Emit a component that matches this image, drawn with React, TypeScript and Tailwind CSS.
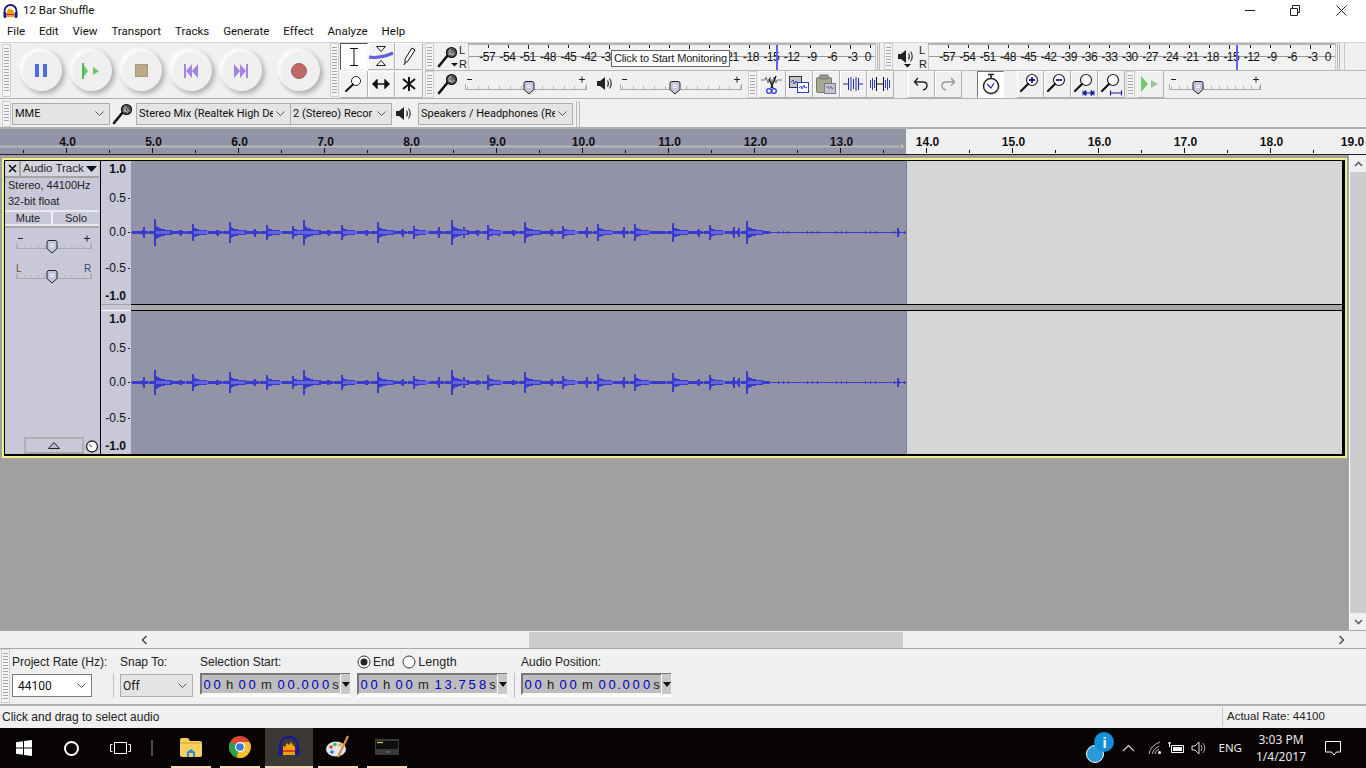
import type { ReactNode } from "react";

const onsets: [number, number][] = [
  [143, 5], [154, 13], [180, 2.5], [192, 8], [217, 2.5], [229, 10], [254, 3.5], [266, 7], [292, 6],
  [303, 12], [328, 2.5], [341, 7], [366, 2.5], [377, 10], [402, 3.5], [413, 6], [438, 5], [451, 12],
  [463, 5], [477, 2.5], [487, 7], [498, 2.5], [513, 2.5], [524, 10], [551, 3], [562, 6], [586, 5],
  [597, 8], [623, 5], [634, 8], [672, 9], [698, 3.5], [709, 7], [733, 5], [738, 4], [746, 11], [897, 4],
];

function buildWave(scale: number) {
  let peak = "";
  let rms = "";
  for (let i = 0; i < 775; i++) {
    const X = i + 131;
    const quiet = X > 762;
    let a = quiet ? ((X * X * 7) % 29 < 2 ? 1 : 0) : (X * 13) % 37 < 2 ? 0 : 1;
    let r = 0;
    for (const [x0, amp] of onsets) {
      const d = X - x0;
      if (d >= 0 && d < 2) a = Math.max(a, amp * scale);
      if (amp >= 5.5 && d >= 2 && d < 24) {
        a = Math.max(a, amp * 0.5 * Math.exp(-d / 7) + 1);
        r = Math.max(r, d < 16 ? 1 : 0);
      }
      if (amp < 5.5 && Math.abs(d) < 2 && !quiet) a = Math.max(a, 2);
    }
    peak += `M${i + 0.5} ${71 - a}V${72 + a}`;
    if (r) rms += `M${i + 0.5} ${71 - r}V${72 + r}`;
  }
  return { peak, rms };
}

const waves = [buildWave(1), buildWave(0.96)];

function Wave({ index }: { index: number }) {
  return (
    <svg width="775" height="143" className="block" shapeRendering="crispEdges">
      <path d={waves[index].peak} stroke="#3a3acb" fill="none" />
      <path d={waves[index].rms} stroke="#6464dc" fill="none" />
    </svg>
  );
}

function Grip({ className = "" }: { className?: string }) {
  return (
    <div className={`w-[9px] shrink-0 border border-[#cfcfcf] bg-[#f4f4f4] py-[3px] px-[1px] ${className}`}>
      <div className="h-full bg-[repeating-linear-gradient(to_bottom,#a6a6a6_0,#a6a6a6_1px,transparent_1px,transparent_3px)]" />
    </div>
  );
}

function Mic({ size = 22, caret = false }: { size?: number; caret?: boolean }) {
  return (
    <svg width={size} height={size} viewBox="0 0 22 22">
      <path d="M2 20 L11 9" stroke="#111" strokeWidth="2.6" strokeLinecap="round" />
      <circle cx="14.5" cy="6.5" r="5" fill="#555" stroke="#111" strokeWidth="1.2" />
      <path d="M11 5l5 5M13 3.5l5 5M11 8h6M13 3v6" stroke="#ddd" strokeWidth="0.6" />
      {caret && <path d="M14 17h7l-3.500 3.500z" fill="#111" />}
    </svg>
  );
}

function Speaker({ caret = false }: { caret?: boolean }) {
  return (
    <svg width="22" height="22" viewBox="0 0 22 22">
      <path d="M2 8h3l5-4v13l-5-4H2z" fill="#222" />
      <path d="M12.500 7.500q2 3 0 6M14.500 5.500q3.500 5 0 10" stroke="#333" strokeWidth="1.100" fill="none" />
      {caret && <path d="M8 18h7l-3.500 3.500z" fill="#111" />}
    </svg>
  );
}

function Slider({ width, thumb, left = "minus", right = "plus" }: { width: number; thumb: number; left?: string; right?: string }) {
  const ticks: number[] = [];
  for (let x = 2; x < width - 1; x += (width - 4) / 11) ticks.push(Math.round(x) + 0.5);
  return (
    <svg width={width} height="20" className="block">
      {left === "minus" ? <path d="M2 4.500h5" stroke="#222" /> : <text x="0" y="8" fontSize="10" fill="#6a5030" fontFamily="Liberation Sans">{left}</text>}
      {right === "plus" ? <path d={`M${width - 8} 4.500h6M${width - 5} 1.500v6`} stroke="#222" /> : <text x={width - 8} y="8" fontSize="10" fill="#3a4a70" fontFamily="Liberation Sans">{right}</text>}
      <path d={`M0.500 9v5M${width - 0.5} 9v5M0 14.500H${width}`} stroke="#a8a8a8" fill="none" />
      {ticks.map((x) => <path key={x} d={`M${x} 11v3`} stroke="#b8b8b8" />)}
      <path d={`M${thumb - 5} 8.500q0-2 2-2h6q2 0 2 2v6l-5 4.500-5-4.500z`} fill="#c4c6e0" stroke="#222" />
      <path d={`M${thumb - 2} 10.500h4M${thumb - 2} 12.500h4`} stroke="#f4f4f4" />
    </svg>
  );
}

function Transport({ children, className = "" }: { children: ReactNode; className?: string }) {
  return (
    <div className={`w-[50px] h-[50px] flex items-center justify-center ${className}`}>
      <div className="w-[41px] h-[41px] rounded-full bg-[#efefef] flex items-center justify-center shadow-[3px_3px_5px_#b4b4b4,-2px_-2px_3px_#ffffff,inset_1px_1px_2px_#ffffff,0_0_4px_#c8c8c8]">
        {children}
      </div>
    </div>
  );
}

function ToolCell({ children, active = false }: { children: ReactNode; active?: boolean }) {
  return (
    <div className={`h-[27px] flex items-center justify-center border-r border-b ${active ? "bg-white border-[#f8f8f8] border-l-[#555] border-t-[#555] border-l border-t" : "bg-[#f2f2f2] border-[#b4b4b4] shadow-[inset_1px_1px_0_#ffffff]"}`}>
      {children}
    </div>
  );
}

function Btn({ children, active = false, className = "" }: { children: ReactNode; active?: boolean; className?: string }) {
  return (
    <div className={`w-[27px] h-[27px] shrink-0 flex items-center justify-center border-r border-b ${active ? "bg-white border-white border-l border-t border-l-[#777] border-t-[#777]" : "border-[#b0b0b0] shadow-[inset_1px_1px_0_#ffffff]"} ${className}`}>
      {children}
    </div>
  );
}

function Magnifier({ extra }: { extra?: ReactNode }) {
  return (
    <svg width="24" height="24" viewBox="0 0 24 24">
      <circle cx="14" cy="8" r="5.500" fill="#fff" stroke="#222" strokeWidth="1.200" />
      <path d="M10 12L3 19" stroke="#111" strokeWidth="2.200" strokeLinecap="round" />
      {extra}
    </svg>
  );
}

const meterLabels = ["-57", "-54", "-51", "-48", "-45", "-42", "-39", "-36", "-33", "-30", "-27", "-24", "-21", "-18", "-15", "-12", "-9", "-6", "-3"];

function Meter({ blue, width }: { blue: number; width: number }) {
  return (
    <div className="relative h-[27px] border-t-2 border-[#b4b4b4] shrink-0 bg-[#f2f2f2]" style={{ width }}>
      <div className="absolute left-0 right-0 top-[11px] h-px bg-[#9a9a9a]" />
      <div className="absolute left-0 top-0 bottom-0 w-px bg-[#c8c8c8]" />
      <div className="absolute right-0 top-0 bottom-0 w-px bg-[#c8c8c8]" />
      <svg width={width} height="4" className="absolute left-0 top-0">
        {Array.from({ length: 21 }).map((_, i) => (
          <path key={i} d={`M${Math.round(i * 20.1 + 20) + 0.5} 0v${i % 4 === 2 ? 4 : 3}`} stroke="#222" />
        ))}
      </svg>
      <div className="relative flex pl-[9px] h-[23px] items-center text-[12px] leading-none text-[#111] tracking-[-0.5px]">
        {meterLabels.map((t) => (
          <span key={t} className="w-[20.3px] shrink-0 text-center">{t}</span>
        ))}
        <span className="ml-[2px]">0</span>
      </div>
      <div className="absolute top-0 bottom-0 w-[2px] bg-[#5f5ff0]" style={{ left: blue }} />
    </div>
  );
}

function LR() {
  return (
    <div className="w-[9px] h-[27px] flex flex-col justify-between text-[11px] leading-[12px] text-[#222] shrink-0 pt-[1px]">
      <span>L</span>
      <span>R</span>
    </div>
  );
}

function Combo({ text, className = "", white = false, big = false }: { text: string; className?: string; white?: boolean; big?: boolean }) {
  return (
    <div className={`flex items-center overflow-hidden border h-[22px] ${white ? "bg-white border-[#7a7a7a]" : "bg-[#e4e4e4] border-[#adadad]"} ${className}`}>
      <span className={`flex-1 overflow-hidden whitespace-nowrap pl-[2px] font-['Roboto',sans-serif] text-[#111] ${big ? "text-[12px]" : "text-[11px]"}`}>{text}</span>
      <svg width="17" height="10" className="shrink-0" viewBox="0 0 17 10">
        <path d="M3.500 2.500l4 4 4-4" stroke="#555" fill="none" />
      </svg>
    </div>
  );
}

const timeCells: [string, string, string][] = [
  ["0", "w-[10px]", "d"], ["0", "w-[10px]", "d"], ["h", "w-[15px]", "u"], ["0", "w-[10px]", "d"], ["0", "w-[10px]", "d"],
  ["m", "w-[19px]", "u"],
];

function TimeBox({ sec, frac }: { sec: string; frac: string }) {
  const cells: [string, string, string][] = [
    ...timeCells,
    [sec[0], "w-[10px]", "d"], [sec[1], "w-[10px]", "d"], [".", "w-[4px]", "d"],
    [frac[0], "w-[10px]", "d"], [frac[1], "w-[10px]", "d"], [frac[2], "w-[11px]", "d"], ["s", "w-[9px]", "u"],
  ];
  return (
    <div className="w-[150px] h-[22px] -mt-px flex items-center border-2 border-[#777] border-r-0 border-b-[#f8f8f8] bg-[#bdbdbd] shrink-0 shadow-[0_2px_0_#ffffff]">
      <div className="flex flex-1 items-center text-[13px] leading-none">
        {cells.map(([c, w, kind], i) => (
          <span key={i} className={`${w} text-center ${kind === "d" ? "text-[#0000c4]" : "text-[#222]"}`}>{c}</span>
        ))}
      </div>
      <div className="w-[10px] h-[20px] shrink-0 bg-[#c8c8c8] border-l border-white flex items-center justify-center">
        <svg width="8" height="5"><path d="M0 0h8L4 5z" fill="#111" /></svg>
      </div>
    </div>
  );
}

function VRuler() {
  const cls = "h-[14px] flex items-center justify-end pr-[1px]";
  const tick = <span className="w-[2px] h-px bg-[#222] ml-[2px]" />;
  const blank = <span className="w-[2px] ml-[2px]" />;
  return (
    <div className="w-[30px] shrink-0 bg-[#c8c8d8] text-[12px] leading-none text-[#111] pt-px">
      <div className={`${cls} font-bold`}>1.0{blank}</div>
      <div className={`${cls} mt-[15px]`}>0.5{tick}</div>
      <div className={`${cls} mt-[20px]`}>0.0{tick}</div>
      <div className={`${cls} mt-[22px]`}>-0.5{tick}</div>
      <div className={`${cls} mt-[14px] font-bold`}>-1.0{blank}</div>
    </div>
  );
}

function Channel({ index }: { index: number }) {
  return (
    <div className="h-[143px] flex">
      <VRuler />
      <div className="w-[776px] shrink-0 bg-[#9393a8] border-r border-[#7d7d90]">
        <Wave index={index} />
      </div>
      <div className="flex-1 bg-[#d6d6d6]" />
    </div>
  );
}

const rulerLabels = ["4.0", "5.0", "6.0", "7.0", "8.0", "9.0", "10.0", "11.0", "12.0", "13.0", "14.0", "15.0", "16.0", "17.0", "18.0"];

function Ruler() {
  return (
    <div className="h-[28px] relative border-t-2 border-[#b0b0b0] border-b border-b-[#222] bg-[#f0f0f0] overflow-hidden">
      <div className="absolute left-0 top-0 bottom-0 w-[906px] bg-[#9494a8]" />
      <svg width="1366" height="25" className="absolute left-0 top-0">
        <path d="M0 17.500H900" stroke="#b8b8b8" strokeWidth="2" />
        <path d="M900 13l6 4.500-6 4.500z" fill="#b4b4b4" stroke="#8a8a8a" />
        {Array.from({ length: 31 }).map((_, i) => {
          const x = 23.5 + i * 43;
          return <path key={i} d={`M${x} ${i % 2 ? 19 : 21}V24`} stroke="#111" />;
        })}
      </svg>
      <div className="relative flex pl-[24.500px] h-[24px] pt-[1px] items-center font-bold text-[12px] leading-none text-[#111]">
        {rulerLabels.map((t) => (
          <span key={t} className="w-[86px] shrink-0 text-center">{t}</span>
        ))}
        <span className="ml-[22px] w-[32px] shrink-0 text-center">19.0</span>
      </div>
    </div>
  );
}

function TrackPanel() {
  return (
    <div className="w-[95px] shrink-0 bg-[#c8c8d8] flex flex-col text-[11px] text-[#222] border-r border-transparent">
      <div className="h-[17px] flex border-b-2 border-[#a4a4a4]">
        <div className="w-[16px] flex items-center justify-center border-r-2 border-[#a4a4a4] bg-[#d4d4e0]">
          <svg width="9" height="9"><path d="M1 1l7 7M8 1l-7 7" stroke="#111" strokeWidth="1.600" /></svg>
        </div>
        <div className="flex-1 flex items-center pl-[2px] leading-none bg-[#d4d4e0] whitespace-nowrap text-[11.500px]">Audio Track</div>
        <div className="w-[14px] bg-[#d4d4e0] flex items-center">
          <svg width="13" height="8"><path d="M1 1h11L6.500 7z" fill="#111" /></svg>
        </div>
      </div>
      <div className="pl-[3px] leading-[16px] -mt-px">Stereo, 44100Hz</div>
      <div className="pl-[3px] leading-[16px]">32-bit float</div>
      <div className="h-[16px] flex mt-[1px] border-y-2 border-[#e8e8f0]">
        <div className="flex-1 flex items-center justify-center leading-none border-r-2 border-[#f2f2f4] bg-[#c8c8d8]">Mute</div>
        <div className="flex-1 flex items-center justify-center leading-none bg-[#c8c8d8]">Solo</div>
      </div>
      <div className="border-t-2 border-[#a8a8a8] pl-[11px] pt-[6px]">
        <Slider width={76} thumb={36} />
        <div className="mt-[10px]">
          <Slider width={76} thumb={36} left="L" right="R" />
        </div>
      </div>
      <div className="flex-1" />
      <div className="flex items-center pl-[19px] h-[17px]">
        <div className="w-[62px] h-[17px] border-2 border-[#b0b0b0] border-b-[#a8a8a8] bg-[#c8c8d8] flex items-center justify-center">
          <svg width="12" height="7"><path d="M0.500 6.500h11L6 0.500z" fill="#b8b8c4" stroke="#222" /></svg>
        </div>
        <svg width="14" height="14" className="ml-px">
          <circle cx="7" cy="7.500" r="5.500" fill="#fff" stroke="#222" strokeWidth="1.300" />
          <path d="M7 8L4 5.500" stroke="#2a2aa0" />
        </svg>
      </div>
    </div>
  );
}

function App() {
  return (
    <div className="w-[1366px] h-[768px] overflow-hidden flex flex-col bg-[#f0f0f0] font-['Liberation_Sans',sans-serif] relative">
      {/* title bar */}
      <div className="h-[22px] bg-white flex items-center pl-[3px] font-['Roboto',sans-serif] text-[11.500px] text-[#111] shrink-0">
        <svg width="15" height="15" viewBox="0 0 15 15">
          <path d="M1.500 10V7a6 6 0 0 1 12 0v3" stroke="#1a1a7a" strokeWidth="1.800" fill="none" />
          <rect x="0.500" y="8" width="3" height="6" rx="1.500" fill="#1a1a8a" />
          <rect x="11.500" y="8" width="3" height="6" rx="1.500" fill="#1a1a8a" />
          <path d="M4 13V7l2-3 1 2 1-2 1 2 2 1v6z" fill="#f0a010" />
          <path d="M4 10.500h7" stroke="#d02020" />
        </svg>
        <span className="ml-[5px]">12 Bar Shuffle</span>
        <div className="flex-1" />
        <svg width="120" height="22" className="mr-[1px]">
          <path d="M0 10.500h10" stroke="#222" />
          <path d="M45.500 8.500h7v7h-7zM47.500 8V5.500h7v7H53" stroke="#222" fill="none" />
          <path d="M91.500 5.500l10 10M101.500 5.500l-10 10" stroke="#222" />
        </svg>
      </div>
      {/* menu */}
      <div className="h-[20px] bg-white flex items-center pl-[7px] gap-[14px] font-['Roboto',sans-serif] text-[11.500px] text-[#111] shrink-0">
        {["File", "Edit", "View", "Transport", "Tracks", "Generate", "Effect", "Analyze", "Help"].map((m) => (
          <span key={m}>{m}</span>
        ))}
      </div>
      {/* toolbars */}
      <div className="h-[57px] shrink-0 flex border-t border-[#d4d4d4] border-b border-b-[#b0b0b0]">
        <div className="w-[329px] flex shrink-0 pl-[2px] py-[1px]">
          <Grip className="h-[53px]" />
          <div className="flex items-center pl-[5px]">
            <Transport>
              <svg width="14" height="13"><path d="M1 0h4v13H1zM9 0h4v13H9z" fill="#4a6ee0" /></svg>
            </Transport>
            <Transport>
              <svg width="18" height="16"><path d="M0 0l6 8-6 8z" fill="#68c868" /><path d="M0 0h2v16H0z" fill="#58b858" /><path d="M11 4l6 4-6 4z" fill="#70c070" /></svg>
            </Transport>
            <Transport>
              <div className="w-[13px] h-[13px] bg-[#b8a888] border border-[#a89878]" />
            </Transport>
            <Transport>
              <svg width="14" height="14"><path d="M0 0h2v14H0zM8 0L2 7l6 7zM14 0L8 7l6 7z" fill="#a484e0" /></svg>
            </Transport>
            <Transport>
              <svg width="14" height="14"><path d="M12 0h2v14h-2zM6 0l6 7-6 7zM0 0l6 7-6 7z" fill="#a484e0" /></svg>
            </Transport>
            <Transport className="ml-[8px]">
              <div className="w-[16px] h-[16px] rounded-full bg-[#c06a6a] border border-[#a85858]" />
            </Transport>
          </div>
        </div>
        <Grip className="ml-[1px] h-[54px]" />
        <div className="w-[83px] shrink-0 ml-[1px] grid grid-cols-3">
          <ToolCell active>
            <svg width="12" height="18"><path d="M2 .5h8M2 17.500h8M6 .5v17" stroke="#111" fill="none" /></svg>
          </ToolCell>
          <ToolCell>
            <svg width="26" height="22" viewBox="0 0 26 22">
              <path d="M8.500 1.500h9l-4.500 5zM8.500 20.500h9l-4.500-5z" fill="none" stroke="#222" />
              <path d="M1 12q10 2 24-4" stroke="#6060e0" strokeWidth="3" fill="none" />
            </svg>
          </ToolCell>
          <ToolCell>
            <svg width="14" height="18" viewBox="0 0 14 18"><path d="M10 1l3 2-7 11-3 2 0-4z" fill="#fff" stroke="#111" /><path d="M3 16l-1 2" stroke="#111" /></svg>
          </ToolCell>
          <ToolCell>
            <svg width="18" height="18" viewBox="0 0 18 18"><circle cx="12" cy="6" r="4.500" fill="#fff" stroke="#222" /><path d="M9 9.500L2 16" stroke="#111" strokeWidth="2" strokeLinecap="round" /></svg>
          </ToolCell>
          <ToolCell>
            <svg width="18" height="10" viewBox="0 0 18 10"><path d="M1 5h16M5 1L1 5l4 4zM13 1l4 4-4 4z" stroke="#111" strokeWidth="1.400" fill="#111" /></svg>
          </ToolCell>
          <ToolCell>
            <svg width="14" height="16" viewBox="0 0 14 16"><path d="M7 1v14M1 3l12 10M13 3L1 13" stroke="#111" strokeWidth="2" /></svg>
          </ToolCell>
        </div>
        <div className="flex-1 flex flex-col ml-[2px]">
          <div className="h-[28px] flex border-b border-[#b8b8b8]">
            <Grip className="h-[27px]" />
            <div className="w-[25px] shrink-0 pl-[3px] pt-[3px]"><Mic caret /></div>
            <LR />
            <Meter width={408} blue={308} />
            <div className="w-[3px] ml-[1px] border-x border-[#b8b8b8]" />
            <div className="w-[4px]" />
            <Grip className="h-[27px]" />
            <div className="w-[26px] shrink-0 pl-[3px] pt-[3px]"><Speaker caret /></div>
            <LR />
            <Meter width={408} blue={308} />
            <div className="w-[3px] ml-[1px] border-x border-[#b8b8b8]" />
            <div className="flex-1 border-l border-[#c8c8c8] ml-[4px]" />
          </div>
          <div className="h-[27px] flex">
            <Grip className="h-[27px]" />
            <div className="w-[31px] shrink-0 pl-[3px] pt-[2px]"><Mic /></div>
            <div className="w-[122px] pt-[4px] shrink-0"><Slider width={122} thumb={64} /></div>
            <div className="w-[33px] shrink-0 pl-[8px] pt-[2px]"><Speaker /></div>
            <div className="w-[122px] pt-[4px] shrink-0"><Slider width={122} thumb={55} /></div>
            <Grip className="h-[27px] ml-[6px]" />
            <div className="w-[2px]" />
            <Btn>
              <svg width="24" height="24" viewBox="0 0 24 24">
                <path d="M1 8h4l1-3 2 6 2-6 2 6 2-6 2 6 1-3h5" stroke="#777" fill="none" />
                <path d="M16 4L11 16M9 7l4 9" stroke="#111" strokeWidth="1.300" />
                <circle cx="9" cy="19" r="2.300" fill="none" stroke="#2a3ad0" strokeWidth="1.300" />
                <circle cx="14" cy="19" r="2.300" fill="none" stroke="#2a3ad0" strokeWidth="1.300" />
              </svg>
            </Btn>
            <Btn>
              <svg width="24" height="22" viewBox="0 0 24 22">
                <rect x="2.500" y="3.500" width="12" height="11" fill="#c4c4c4" stroke="#333" />
                <rect x="10.500" y="9.500" width="11" height="10" fill="#fff" stroke="#2a3ad0" />
                <path d="M4 9l2-2 1 4 2-3 1 2M12 15l2-2 1 3 2-4 1 3 2-1" stroke="#3a4ad0" fill="none" />
              </svg>
            </Btn>
            <Btn>
              <svg width="24" height="22" viewBox="0 0 24 22">
                <rect x="2.500" y="4.500" width="15" height="15" rx="1" fill="#a8a890" stroke="#787868" />
                <rect x="6" y="2" width="8" height="4" fill="#9a9a88" stroke="#777" />
                <rect x="10.500" y="10.500" width="11" height="10" fill="#c4c4cc" stroke="#7a7a98" />
                <path d="M12 15l2-2 1 3 2-3 1 3 2-1" stroke="#7a7aa0" fill="none" />
              </svg>
            </Btn>
            <Btn>
              <svg width="22" height="18" viewBox="0 0 22 18">
                <path d="M1 9h5M16 9h5M6.500 3v12M16.500 3v12M9 2v14M11.500 4v10M14 2v14" stroke="#1a2aa8" fill="none" />
              </svg>
            </Btn>
            <Btn>
              <svg width="22" height="18" viewBox="0 0 22 18">
                <path d="M7.500 9h7M7.500 2v14M14.500 2v14" stroke="#111" fill="none" />
                <path d="M1.500 5v8M3.500 3v12M5.500 5v8M16.500 5v8M18.500 3v12M20.500 5v8" stroke="#2a3ad0" fill="none" />
              </svg>
            </Btn>
            <div className="w-[14px]" />
            <Btn>
              <svg width="16" height="14" viewBox="0 0 16 14"><path d="M5 1L1.500 5 5 8.500M2 5h8q4 0 4 3.500T10 13" stroke="#222" strokeWidth="1.400" fill="none" /></svg>
            </Btn>
            <Btn>
              <svg width="16" height="14" viewBox="0 0 16 14"><path d="M11 1l3.500 4L11 8.500M14 5H6q-4 0-4 3.500T6 13" stroke="#9a9a9a" strokeWidth="1.400" fill="none" /></svg>
            </Btn>
            <div className="w-[15px]" />
            <Btn active>
              <svg width="22" height="24" viewBox="0 0 22 24">
                <path d="M8 1.500h6M11 2v4" stroke="#222" strokeWidth="1.600" />
                <circle cx="12" cy="14" r="8" fill="#ddd" />
                <circle cx="11" cy="13" r="7.500" fill="#fff" stroke="#222" strokeWidth="1.400" />
                <path d="M7 11l4 4 3-5" stroke="#2a2ab0" strokeWidth="1.200" fill="none" />
              </svg>
            </Btn>
            <div className="w-[13px]" />
            <Btn>
              <Magnifier extra={<path d="M11 8h6M14 5v6" stroke="#1a1aa0" strokeWidth="1.800" />} />
            </Btn>
            <Btn>
              <Magnifier extra={<path d="M11 8h6" stroke="#1a1aa0" strokeWidth="1.800" />} />
            </Btn>
            <Btn>
              <Magnifier extra={<path d="M11 21h11M11 18.500v5M22 18.500v5M14 18.500L11 21l3 2.500zM19 18.500l3 2.500-3 2.500z" stroke="#1a1aa0" fill="#1a1aa0" />} />
            </Btn>
            <Btn>
              <Magnifier extra={<path d="M11.500 18.500v5M22.500 18.500v5M11 21h12" stroke="#1a1aa0" strokeWidth="1.200" />} />
            </Btn>
            <Grip className="h-[27px] ml-[1px]" />
            <div className="w-[2px]" />
            <Btn>
              <svg width="20" height="18" viewBox="0 0 20 18"><path d="M1 1l7 8-7 8z" fill="#70cc70" /><path d="M11 5l7 4-7 4z" fill="#98c898" /></svg>
            </Btn>
            <div className="w-[5px]" />
            <div className="w-[92px] pt-[4px] shrink-0"><Slider width={92} thumb={29} /></div>
          </div>
        </div>
      </div>
      <div className="h-[28px] shrink-0 flex items-center pt-[2px]">
        <Grip className="ml-[2px] h-[26px]" />
        <Combo text="MME" className="w-[98px] ml-[1px]" />
        <div className="w-[26px] flex justify-center"><Mic /></div>
        <Combo text="Stereo Mix (Realtek High De" className="w-[155px]" />
        <Combo text="2 (Stereo) Recor" className="w-[102px] -ml-px" />
        <div className="w-[26px] flex justify-center"><Speaker /></div>
        <Combo text="Speakers / Headphones (Re" className="w-[155px]" />
        <div className="w-[4px] h-full ml-[3px] border-x border-[#b8b8b8]" />
      </div>
      <Ruler />
      {/* tracks */}
      <div className="h-[475px] shrink-0 flex">
        <div className="w-[1349px] shrink-0 bg-[#a0a0a0] pl-[2px] pt-[3px]">
          <div className="w-[1345px] h-[300px] bg-[#f0f088] p-[2px]">
            <div className="h-[296px] bg-black pl-px pt-px pr-[3px] pb-[2px] flex">
              <TrackPanel />
              <div className="w-px bg-black shrink-0" />
              <div className="flex-1 flex flex-col">
                <Channel index={0} />
                <div className="h-[7px] flex">
                  <div className="w-[30px] bg-[#c8c8d8] border-t border-[#a0a0a0] border-b border-b-white" />
                  <div className="flex-1 bg-[#a8a8a8] border-y border-black" />
                </div>
                <Channel index={1} />
              </div>
            </div>
          </div>
        </div>
        <div className="flex-1 border-l border-white flex flex-col bg-[#f0f0f0]">
          <div className="h-[17px] flex items-center justify-center">
            <svg width="9" height="6"><path d="M1 5l3.500-3.500L8 5" stroke="#606060" strokeWidth="1.600" fill="none" /></svg>
          </div>
          <div className="flex-1 bg-[#cdcdcd]" />
          <div className="h-[17px] flex items-center justify-center">
            <svg width="9" height="6"><path d="M1 1l3.500 3.500L8 1" stroke="#606060" strokeWidth="1.600" fill="none" /></svg>
          </div>
        </div>
      </div>
      {/* horizontal scroll */}
      <div className="h-[19px] shrink-0 border-t border-[#a8a8a8] border-b border-b-[#a8a8a8] flex items-center pl-[141px] pr-[21px]">
        <svg width="7" height="10"><path d="M5.500 1L1.500 5l4 4" stroke="#505050" strokeWidth="1.600" fill="none" /></svg>
        <div className="ml-[381px] w-[374px] h-[16px] bg-[#cdcdcd]" />
        <div className="flex-1" />
        <svg width="7" height="10"><path d="M1.500 1l4 4-4 4" stroke="#505050" strokeWidth="1.600" fill="none" /></svg>
      </div>
      {/* selection bar */}
      <div className="h-[57px] shrink-0 flex border-b-2 border-[#b0b0b0] text-[12px] text-[#222]">
        <Grip className="ml-px h-[54px]" />
        <div className="w-[101px] shrink-0 ml-[2px] pt-[6px]">
          <div className="leading-[14px] h-[19px] whitespace-nowrap">Project Rate (Hz):</div>
          <Combo text="44100" white big className="w-[80px] h-[23px] pl-[3px]" />
        </div>
        <div className="w-px h-[25px] bg-[#c0c0c0] mt-[24px]" />
        <div className="w-[73px] shrink-0 ml-[6px] pt-[6px]">
          <div className="leading-[14px] h-[19px]">Snap To:</div>
          <Combo text="Off" big className="w-[73px] h-[23px] bg-[#e0e0e0]" />
        </div>
        <div className="w-[157px] shrink-0 ml-[7px] pt-[6px]">
          <div className="leading-[14px] h-[19px]">Selection Start:</div>
          <TimeBox sec="00" frac="000" />
        </div>
        <div className="w-[157px] shrink-0 pt-[6px]">
          <div className="leading-[14px] h-[19px] flex items-start">
            <svg width="14" height="14" className="shrink-0">
              <circle cx="7" cy="7" r="6" fill="#fff" stroke="#333" />
              <circle cx="7" cy="7" r="3.500" fill="#222" />
            </svg>
            <span className="ml-[2px]">End</span>
            <svg width="14" height="14" className="shrink-0 ml-[8px]">
              <circle cx="7" cy="7" r="6" fill="#fff" stroke="#333" />
            </svg>
            <span className="ml-[2px] text-[12.500px]">Length</span>
          </div>
          <TimeBox sec="13" frac="758" />
        </div>
        <div className="w-px h-[25px] bg-[#c0c0c0] mt-[24px]" />
        <div className="w-[150px] shrink-0 ml-[6px] pt-[6px]">
          <div className="leading-[14px] h-[19px]">Audio Position:</div>
          <TimeBox sec="00" frac="000" />
        </div>
      </div>
      {/* status bar */}
      <div className="h-[22px] shrink-0 flex items-center text-[12px] text-[#222]">
        <span className="ml-[2px]">Click and drag to select audio</span>
        <div className="flex-1" />
        <div className="w-[144px] h-[20px] border-l border-[#c8c8c8] pl-[4px] flex items-center text-[11.500px]">Actual Rate: 44100</div>
      </div>
      {/* taskbar */}
      <div className="h-[40px] shrink-0 bg-[#080404] flex items-center text-white relative">
        <svg width="16" height="16" className="ml-[16px]" viewBox="0 0 16 16"><path d="M0 2.200L7 1.200V7.500H0zM8 1L16 0V7.500H8zM0 8.500H7V14.800L0 13.800zM8 8.500H16V16L8 15z" fill="#fff" /></svg>
        <div className="ml-[32px] w-[15px] h-[15px] rounded-full border-2 border-white" />
        <svg width="21" height="14" className="ml-[31px]"><path d="M4.500 1.500h12v11h-12zM2.500 3.500h-2v7h2M18.500 3.500h2v7h-2" stroke="#fff" fill="none" /></svg>
        <div className="ml-[20px] w-[2px] h-[16px] border-x border-[#4a4a4a]" />
        <div className="ml-[18px] w-[40px] h-[40px] flex items-center justify-center border-b-2 border-[#f8d8b8]">
          <svg width="22" height="20" viewBox="0 0 22 20">
            <path d="M0 3q0-2 2-2h6l2 3h10q2 0 2 2v12q0 2-2 2H2q-2 0-2-2z" fill="#f4d060" />
            <path d="M0 7h22v-2H0z" fill="#e8b840" />
            <path d="M7 20v-5l4-3 4 3v5z" fill="#2a8ad8" />
            <rect x="9" y="16" width="4" height="4" fill="#f4d060" />
          </svg>
        </div>
        <div className="ml-[9px] w-[40px] h-[40px] flex items-center justify-center border-b-2 border-[#f8d8b8]">
          <svg width="22" height="22" viewBox="0 0 22 22">
            <circle cx="11" cy="11" r="11" fill="#dd4838" />
            <path d="M11 11L1.500 5.500A11 11 0 0 0 8 21.600z" fill="#2f9f48" />
            <path d="M11 6h9.500A11 11 0 0 1 8 21.600z" fill="#f4c430" />
            <circle cx="11" cy="11" r="5" fill="#fff" />
            <circle cx="11" cy="11" r="3.800" fill="#3a78e0" />
          </svg>
        </div>
        <div className="ml-[5px] w-[48px] h-[40px] bg-[#3c3835] flex items-center justify-center border-b-2 border-[#f8d8b8]">
          <svg width="22" height="22" viewBox="0 0 22 22">
            <path d="M2 13V10a9 9 0 0 1 18 0v3" stroke="#1a1a90" strokeWidth="2.400" fill="none" />
            <rect x="0.500" y="11" width="4" height="9" rx="2" fill="#1a1a90" />
            <rect x="17.500" y="11" width="4" height="9" rx="2" fill="#1a1a90" />
            <path d="M5 19V10l2 1 2-4 2 2 2-3 2 3 2 2v8z" fill="#f0a010" />
            <path d="M5 15h12" stroke="#d82020" strokeWidth="1.500" />
          </svg>
        </div>
        <div className="ml-[5px] w-[40px] h-[40px] flex items-center justify-center border-b-2 border-[#f8d8b8]">
          <svg width="24" height="24" viewBox="0 0 24 24">
            <ellipse cx="10" cy="14" rx="10" ry="7.500" fill="#dfe8f0" />
            <circle cx="5" cy="12" r="1.800" fill="#e04040" />
            <circle cx="9" cy="9.500" r="1.800" fill="#40b040" />
            <circle cx="14" cy="10" r="1.800" fill="#e8b020" />
            <circle cx="6" cy="17" r="1.800" fill="#3070e0" />
            <path d="M22 1L12 22" stroke="#d89040" strokeWidth="2.200" />
          </svg>
        </div>
        <div className="ml-[9px] w-[40px] h-[40px] flex items-center justify-center border-b-2 border-[#f8d8b8]">
          <svg width="24" height="16" viewBox="0 0 24 16">
            <rect width="24" height="16" fill="#3a3a3a" />
            <rect x="1" y="2" width="22" height="8" fill="#0e0e10" />
            <path d="M2 3.500h6" stroke="#d0c040" strokeWidth="1.400" />
            <path d="M12 13h3" stroke="#707088" strokeWidth="1.400" />
          </svg>
        </div>
        <div className="flex-1" />
        <div className="relative w-[28px] h-[32px] mr-[8px]">
          <div className="absolute left-0 bottom-[1px] w-[18px] h-[18px] rounded-full bg-[#2a9ad8] border border-white" />
          <div className="absolute left-[8px] top-0 w-[20px] h-[20px] rounded-full bg-[#1590d8] flex items-center justify-center text-[15px] font-bold leading-none text-white">i</div>
        </div>
        <svg width="13" height="8"><path d="M1 7l5.500-5.500L12 7" stroke="#ddd" strokeWidth="1.100" fill="none" /></svg>
        <svg width="15" height="14" className="ml-[13px]" viewBox="0 0 15 14">
          <path d="M1 13Q2 5 12 1M4 13q1-5 7-8M7 13q0-3 4-5" stroke="#bbb" fill="none" />
          <circle cx="11.500" cy="11.500" r="1.500" fill="#fff" />
        </svg>
        <svg width="16" height="12" className="ml-[5px]" viewBox="0 0 16 12"><path d="M3.500 3.500h12v7h-12z" stroke="#fff" fill="none" /><rect x="5" y="5" width="9" height="4" fill="#fff" /><path d="M0 1h3M1.500 0v5" stroke="#fff" /></svg>
        <svg width="16" height="14" className="ml-[7px]" viewBox="0 0 16 14"><path d="M1 5h3l4-4v12l-4-4H1z" stroke="#ddd" fill="none" /><path d="M10 4q2 3 0 6M12 2q3.500 5 0 10" stroke="#aaa" fill="none" /></svg>
        <span className="ml-[11px] font-['Noto_Sans',sans-serif] text-[11.500px] text-[#e8e8e8] leading-none">ENG</span>
        <div className="w-[52px] ml-[13px] flex flex-col items-center font-['Noto_Sans',sans-serif] text-[12px] leading-[17px] text-[#e8e8e8] whitespace-nowrap">
          <div>3:03 PM</div>
          <div>1/4/2017</div>
        </div>
        <svg width="16" height="15" className="ml-[18px] mr-[25px]" viewBox="0 0 16 15"><path d="M.5.500h15v10.500h-4l-2.500 3-2.500-3h-6z" stroke="#fff" fill="none" /></svg>
      </div>
      {/* tooltip */}
      <div className="absolute left-[611px] top-[50px] h-[17px] w-[119px] border border-[#666] bg-white text-[11px] tracking-[-0.15px] leading-none flex items-center justify-center whitespace-nowrap text-[#222]">
        Click to Start Monitoring
      </div>
    </div>
  );
}

export default App;
